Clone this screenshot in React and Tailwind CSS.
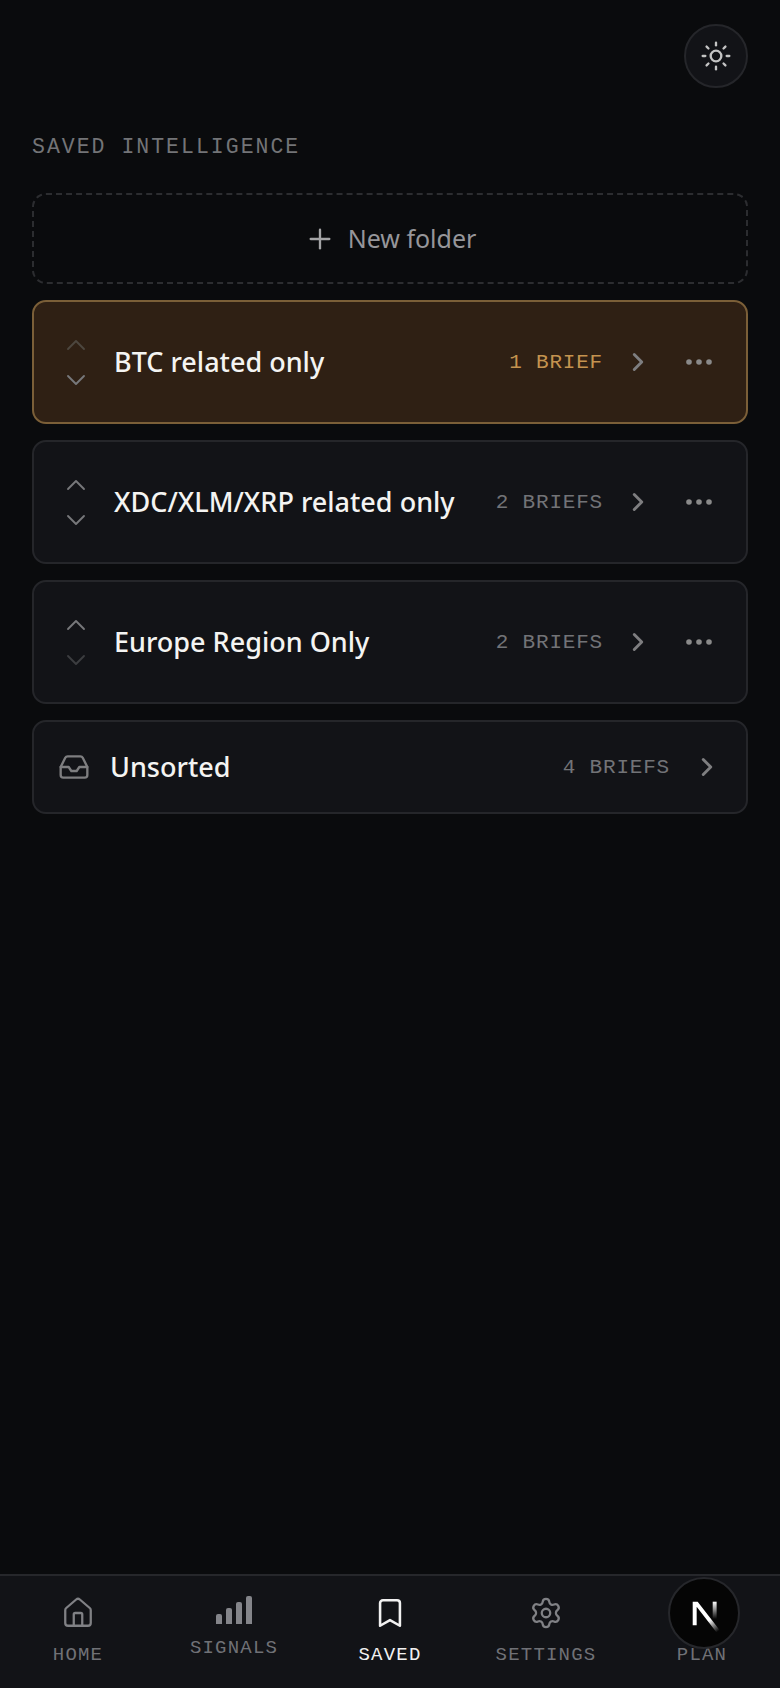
import { Bookmark, ChevronDown, ChevronRight, ChevronUp, House, Inbox, Plus, Settings, Sun } from 'lucide-react';

const sans = "font-['Noto_Sans',sans-serif]";
const mono = "font-['Liberation_Mono',monospace]";

const folders = [
  { name: 'BTC related only', count: '1 BRIEF', active: true, upOff: true },
  { name: 'XDC/XLM/XRP related only', count: '2 BRIEFS' },
  { name: 'Europe Region Only', count: '2 BRIEFS', downOff: true },
];

function Dots() {
  return (
    <svg width="26" height="6" viewBox="0 0 26 6" className="text-[#8a8a8a]" fill="currentColor">
      <circle cx="3" cy="3" r="2.8" />
      <circle cx="13" cy="3" r="2.8" />
      <circle cx="23" cy="3" r="2.8" />
    </svg>
  );
}

function FolderRow({ folder }) {
  const { active, upOff, downOff } = folder;
  return (
    <div
      className={`flex h-[124px] items-center rounded-[14px] border-2 pl-[26px] pr-[34px] ${
        active ? 'border-[#7b5f38] bg-[#2f2014]' : 'border-[#25262a] bg-[#121317]'
      }`}
    >
      <div className="flex w-8 flex-col gap-[3px]">
        <ChevronUp size={32} strokeWidth={1.4} className={upOff ? 'text-[#4d473f]' : 'text-[#77787b]'} />
        <ChevronDown size={32} strokeWidth={1.4} className={downOff ? 'text-[#3c3d40]' : 'text-[#77787b]'} />
      </div>
      <div className={`ml-[22px] flex-1 whitespace-nowrap text-[27px] font-medium text-[#f4f4f2] ${sans}`}>
        {folder.name}
      </div>
      <div className={`mt-[2px] text-[21px] tracking-[0.8px] ${mono} ${active ? 'text-[#c4934f]' : 'text-[#727377]'}`}>
        {folder.count}
      </div>
      <ChevronRight size={30} strokeWidth={2.3} className="ml-[20px] text-[#7e7e80]" />
      <div className="ml-[33px]">
        <Dots />
      </div>
    </div>
  );
}

function SignalBars() {
  return (
    <div className="flex h-7 items-end gap-1">
      <div className="h-[10px] w-[6px] rounded-t-[2px] bg-[#84858a]" />
      <div className="h-4 w-[6px] rounded-t-[2px] bg-[#84858a]" />
      <div className="h-[22px] w-[6px] rounded-t-[2px] bg-[#84858a]" />
      <div className="h-7 w-[6px] rounded-t-[2px] bg-[#84858a]" />
    </div>
  );
}

function NavItem({ icon, label, active, className = 'pt-[20px] gap-[14px]' }) {
  return (
    <div className={`flex flex-1 flex-col items-center ${className}`}>
      {icon}
      <div className={`text-[19px] leading-[22px] tracking-[1.2px] ${mono} ${active ? 'text-[#f1f1f1]' : 'text-[#707176]'}`}>
        {label}
      </div>
    </div>
  );
}

function NextMark() {
  return (
    <svg width="59" height="59" viewBox="0 0 180 180" fill="none">
      <path
        d="M149.508 157.52L69.142 54H54V125.97H66.1136V69.3836L139.999 164.845C143.333 162.614 146.509 160.165 149.508 157.52Z"
        fill="url(#nextA)"
      />
      <rect x="115" y="54" width="12" height="72" fill="url(#nextB)" />
      <defs>
        <linearGradient id="nextA" x1="105" y1="110" x2="132" y2="144" gradientUnits="userSpaceOnUse">
          <stop stopColor="white" />
          <stop offset="1" stopColor="white" stopOpacity="0" />
        </linearGradient>
        <linearGradient id="nextB" x1="121" y1="54" x2="120.8" y2="106.9" gradientUnits="userSpaceOnUse">
          <stop stopColor="white" />
          <stop offset="1" stopColor="white" stopOpacity="0" />
        </linearGradient>
      </defs>
    </svg>
  );
}

export default function App() {
  return (
    <div className="flex h-[1688px] w-[780px] flex-col overflow-hidden bg-[#0a0b0d]">
      <div className="flex-1 px-8 pt-6">
        <div className="flex justify-end">
          <button className="flex h-16 w-16 items-center justify-center rounded-full border-2 border-[#25262a] bg-[#121317] text-[#c4c4c4]">
            <Sun size={32} strokeWidth={1.75} />
          </button>
        </div>

        <h2 className={`mt-[46px] text-[21.5px] leading-[26px] font-normal tracking-[2px] text-[#737477] ${mono}`}>
          SAVED INTELLIGENCE
        </h2>

        <button className="mt-[33px] flex h-[91px] w-full items-center justify-center gap-[12px] rounded-[14px] border-2 border-dashed border-[#2c2d30] text-[#96969a]">
          <Plus size={32} strokeWidth={1.75} className="text-[#a4a4a6]" />
          <span className={`text-[25px] ${sans}`}>New folder</span>
        </button>

        <div className="mt-4 flex flex-col gap-4">
          {folders.map((folder) => (
            <FolderRow key={folder.name} folder={folder} />
          ))}

          <div className="flex h-[94px] items-center rounded-[14px] border-2 border-[#25262a] bg-[#121317] pl-[24px] pr-[24px]">
            <Inbox size={32} strokeWidth={1.75} className="text-[#7e7e80]" />
            <div className={`ml-[20px] flex-1 text-[27px] font-medium text-[#f4f4f2] ${sans}`}>Unsorted</div>
            <div className={`mt-[2px] text-[21px] tracking-[0.8px] text-[#727377] ${mono}`}>4 BRIEFS</div>
            <ChevronRight size={30} strokeWidth={2.3} className="ml-[22px] text-[#7e7e80]" />
          </div>
        </div>
      </div>

      <nav className="relative flex h-[114px] border-t-2 border-[#26272b] bg-[#121317]">
        <NavItem label="HOME" icon={<House size={34} strokeWidth={1.6} className="text-[#808185]" />} />
        <NavItem label="SIGNALS" className="pt-[20px] gap-[13px]" icon={<SignalBars />} />
        <NavItem label="SAVED" active icon={<Bookmark size={34} strokeWidth={1.8} className="text-[#f1f1f1]" />} />
        <NavItem label="SETTINGS" icon={<Settings size={34} strokeWidth={1.6} className="text-[#808185]" />} />
        <NavItem label="PLAN" className="pt-[68px]" icon={null} />
        <div className="absolute top-[1px] right-[40px] flex h-[72px] w-[72px] items-center justify-center rounded-full border-2 border-[#26272b] bg-[#050505]">
          <NextMark />
        </div>
      </nav>
    </div>
  );
}
